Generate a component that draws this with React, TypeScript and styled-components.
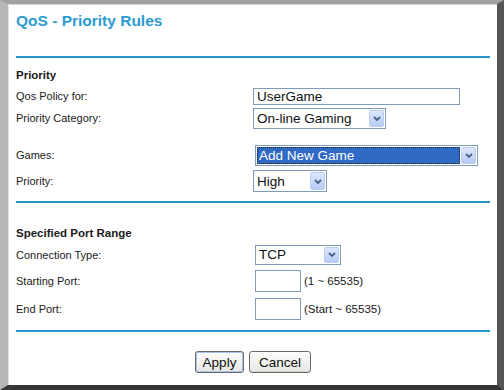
import { FC } from "react";
import styled, { createGlobalStyle } from "styled-components";

const GlobalStyle = createGlobalStyle`
  html, body {
    margin: 0;
    padding: 0;
    background: #ffffff;
  }
  body {
    font-family: "Liberation Sans", Arial, sans-serif;
    color: #1a1a1a;
  }
`;

const Frame = styled.div`
  width: 504px;
  height: 390px;
  box-sizing: border-box;
  border-top: 4px solid #a2a2a2;
  border-left: 8px solid #b7b7b7;
  border-right: 7px solid #555555;
  border-bottom: 5px solid #363636;
  box-shadow: inset 1px 0 0 #dedede, inset 0 1px 0 #d4d4d4;
  background: #ffffff;
  padding: 0 7px 0 8px;
  display: flex;
  flex-direction: column;
`;

const Title = styled.h1`
  margin: 0;
  height: 52px;
  box-sizing: border-box;
  padding-top: 8px;
  font-size: 15.5px;
  line-height: 18px;
  font-weight: bold;
  color: #2c9bd0;
`;

const Divider = styled.div`
  height: 2px;
  background: #2596c9;
  flex: none;
`;

const Section = styled.div<{ $top: number; $bottom: number }>`
  padding-top: ${(p) => p.$top}px;
  padding-bottom: ${(p) => p.$bottom}px;
  display: flex;
  flex-direction: column;
`;

const Row = styled.div<{ $h: number }>`
  height: ${(p) => p.$h}px;
  display: grid;
  grid-template-columns: 237px 1fr;
  align-items: center;
`;

const Spacer = styled.div<{ $h: number }>`
  height: ${(p) => p.$h}px;
`;

const Heading = styled.div`
  font-size: 11.5px;
  font-weight: bold;
`;

const Label = styled.div`
  font-size: 11px;
`;

const Cell = styled.div<{ $indent?: number }>`
  display: flex;
  align-items: center;
  padding-left: ${(p) => p.$indent ?? 0}px;
`;

const TextBox = styled.input<{ $w: number; $h: number }>`
  width: ${(p) => p.$w}px;
  height: ${(p) => p.$h}px;
  box-sizing: border-box;
  border: 1px solid #7f9db9;
  padding: 0 3px;
  margin: 0;
  font-family: "Liberation Sans", Arial, sans-serif;
  font-size: 13.5px;
  color: #111;
  background: #fff;
  outline: none;
`;

const Hint = styled.span`
  font-size: 11.5px;
  margin-left: 3px;
`;

const SelectBox = styled.div<{ $w: number; $h: number }>`
  width: ${(p) => p.$w}px;
  height: ${(p) => p.$h}px;
  box-sizing: border-box;
  border: 1px solid #7f9db9;
  padding: 1px;
  display: flex;
  gap: 1px;
  background: #fff;
`;

const SelectValue = styled.div<{ $active?: boolean }>`
  flex: 1;
  display: flex;
  align-items: center;
  box-sizing: border-box;
  padding-left: 2px;
  font-size: 13.5px;
  white-space: nowrap;
  overflow: hidden;
  color: ${(p) => (p.$active ? "#ffffff" : "#111111")};
  background: ${(p) => (p.$active ? "#316ac5" : "transparent")};
  outline: ${(p) => (p.$active ? "1px dotted #202020" : "none")};
  outline-offset: -1px;
`;

const ArrowBox = styled.div`
  width: 15px;
  flex: none;
  box-sizing: border-box;
  border: 1px solid #bccdf2;
  border-radius: 2px;
  background: linear-gradient(#dce7fd, #b6cbf5);
  display: flex;
  align-items: center;
  justify-content: center;
`;

const ButtonBar = styled.div`
  flex: 1;
  display: flex;
  justify-content: center;
  align-items: flex-start;
  gap: 5px;
  padding-top: 19px;
`;

const Button = styled.button<{ $w: number; $primary?: boolean }>`
  width: ${(p) => p.$w}px;
  height: 22px;
  box-sizing: border-box;
  padding: 0;
  font-family: "Liberation Sans", Arial, sans-serif;
  font-size: 13.5px;
  color: #111;
  border: 1px solid #6b6b6b;
  border-radius: 3px;
  background: linear-gradient(#fdfdfd, #e6e6e2);
  box-shadow: ${(p) =>
    p.$primary ? "inset 0 0 0 1px #a9c4ea" : "inset 0 -1px 0 #d2d2cc"};
`;

interface DropdownProps {
  value: string;
  width: number;
  height: number;
  active?: boolean;
}

const Dropdown: FC<DropdownProps> = ({ value, width, height, active }) => (
  <SelectBox $w={width} $h={height}>
    <SelectValue $active={active}>{value}</SelectValue>
    <ArrowBox>
      <svg width="8" height="5" viewBox="0 0 8 5">
        <path d="M1 1 L4 4 L7 1" fill="none" stroke="#4d6185" strokeWidth="1.8" />
      </svg>
    </ArrowBox>
  </SelectBox>
);

const App: FC = () => {
  return (
    <>
      <GlobalStyle />
      <Frame>
        <Title>QoS - Priority Rules</Title>
        <Divider />
        <Section $top={6} $bottom={6}>
          <Row $h={22}>
            <Heading>Priority</Heading>
          </Row>
          <Row $h={20}>
            <Label>Qos Policy for:</Label>
            <Cell>
              <TextBox $w={207} $h={17} defaultValue="UserGame" readOnly />
            </Cell>
          </Row>
          <Row $h={24}>
            <Label>Priority Category:</Label>
            <Cell>
              <Dropdown value="On-line Gaming" width={133} height={21} />
            </Cell>
          </Row>
          <Spacer $h={13} />
          <Row $h={24}>
            <Label>Games:</Label>
            <Cell $indent={2}>
              <Dropdown value="Add New Game" width={223} height={21} active />
            </Cell>
          </Row>
          <Row $h={28}>
            <Label>Priority:</Label>
            <Cell>
              <Dropdown value="High" width={74} height={22} />
            </Cell>
          </Row>
        </Section>
        <Divider />
        <Section $top={20} $bottom={8}>
          <Row $h={20}>
            <Heading>Specified Port Range</Heading>
          </Row>
          <Row $h={23}>
            <Label>Connection Type:</Label>
            <Cell $indent={2}>
              <Dropdown value="TCP" width={86} height={20} />
            </Cell>
          </Row>
          <Row $h={30}>
            <Label>Starting Port:</Label>
            <Cell $indent={2}>
              <TextBox $w={46} $h={22} readOnly />
              <Hint>(1 ~ 65535)</Hint>
            </Cell>
          </Row>
          <Row $h={26}>
            <Label>End Port:</Label>
            <Cell $indent={2}>
              <TextBox $w={46} $h={22} readOnly />
              <Hint>(Start ~ 65535)</Hint>
            </Cell>
          </Row>
        </Section>
        <Divider />
        <ButtonBar>
          <Button $w={49} $primary>
            Apply
          </Button>
          <Button $w={62}>Cancel</Button>
        </ButtonBar>
      </Frame>
    </>
  );
};

export default App;
